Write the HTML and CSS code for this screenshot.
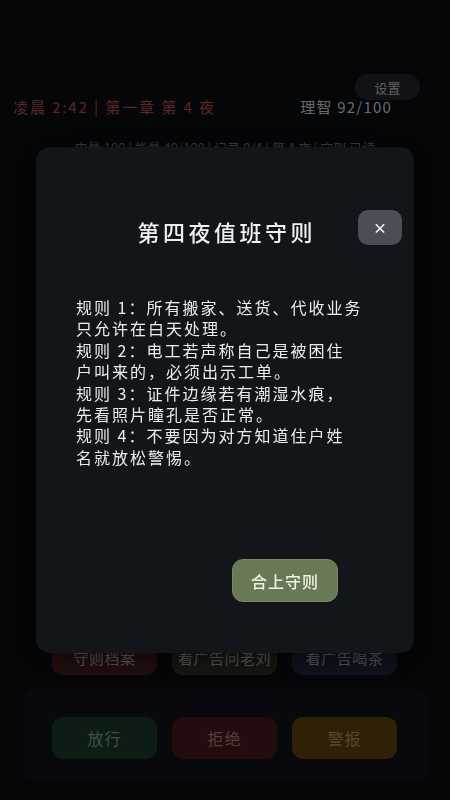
FILE: index.html
```html
<!DOCTYPE html>
<html lang="zh-CN">
<head>
<meta charset="utf-8">
<title>第四夜值班守则</title>
<link rel="stylesheet" href="styles.css">
</head>
<body>
<div class="app">
  <div class="top-row">
    <button class="settings">设置</button>
  </div>
  <div class="status-row">
    <span class="time">凌晨 2:42 | 第一章 第 4 夜</span>
    <span class="sanity">理智 92/100</span>
  </div>
  <div class="info-line">电量 100 | 能量 40/100 | 记录 0/4 | 第 4 夜 | 守则 已读</div>

  <div class="tools-row">
    <button class="tool tool-red">守则档案</button>
    <button class="tool tool-olive">看广告问老刘</button>
    <button class="tool tool-navy">看广告喝茶</button>
  </div>
  <div class="action-panel">
    <button class="action action-green">放行</button>
    <button class="action action-red">拒绝</button>
    <button class="action action-yellow">警报</button>
  </div>
</div>

<div class="overlay">
  <div class="modal">
    <div class="modal-header">
      <span></span>
      <h2 class="modal-title">第四夜值班守则</h2>
      <button class="close-btn">×</button>
    </div>
    <div class="rules">
      <p>规则 1：所有搬家、送货、代收业务只允许在白天处理。</p>
      <p>规则 2：电工若声称自己是被困住<br>户叫来的，必须出示工单。</p>
      <p>规则 3：证件边缘若有潮湿水痕，<br>先看照片瞳孔是否正常。</p>
      <p>规则 4：不要因为对方知道住户姓<br>名就放松警惕。</p>
    </div>
    <button class="confirm-btn">合上守则</button>
  </div>
</div>
</body>
</html>
```
FILE: styles.css
```css
* { box-sizing: border-box; }
html, body {
  margin: 0;
  padding: 0;
  width: 450px;
  height: 800px;
  overflow: hidden;
  background: #060709;
  font-family: "Noto Sans CJK SC", "Noto Sans", sans-serif;
}
button {
  font-family: inherit;
  border: none;
  cursor: pointer;
  padding: 0;
}
.app {
  height: 800px;
  display: flex;
  flex-direction: column;
  padding-top: 74px;
}
.top-row {
  display: flex;
  justify-content: flex-end;
  padding-right: 30px;
}
.settings {
  width: 65px;
  height: 26px;
  border-radius: 13px;
  background: #131518;
  color: #6c6f74;
  font-size: 13px;
}
.status-row {
  display: flex;
  justify-content: space-between;
  padding: 0 58px 0 13px;
  font-size: 15px;
  line-height: 14px;
  letter-spacing: 1.9px;
}
.time { color: #6b2c2e; }
.sanity { color: #7a7b7e; letter-spacing: 1.2px; }
.info-line {
  margin-top: 26px;
  text-align: center;
  color: #404754;
  font-size: 13px;
  line-height: 16px;
}
.tools-row {
  margin-top: auto;
  display: flex;
  gap: 15px;
  padding-left: 52px;
}
.tool {
  width: 105px;
  height: 36px;
  border-radius: 10px;
  font-size: 15px;
  letter-spacing: 0.5px;
  color: #67686b;
}
.tool-red { background: #281112; }
.tool-olive { background: #1a1c14; }
.tool-navy { background: #121724; }
.action-panel {
  margin: 13px 22px 18px 23px;
  height: 94px;
  border-radius: 14px;
  background: #090b0e;
  display: flex;
  gap: 15px;
  padding: 29px 0 0 29px;
}
.action {
  width: 105px;
  height: 42px;
  border-radius: 11px;
  font-size: 16px;
  letter-spacing: 1px;
}
.action-green { background: #0f2218; color: #435e4b; }
.action-red { background: #2a0d0f; color: #634547; }
.action-yellow { background: #352607; color: #625334; }

.overlay {
  position: fixed;
  inset: 0;
  background: rgba(0, 0, 0, 0.12);
  padding: 147px 0 0 36px;
}
.modal {
  width: 378px;
  height: 506px;
  border-radius: 14px;
  background: #121519;
  box-shadow: 0 6px 30px rgba(0, 0, 0, 0.6);
  display: flex;
  flex-direction: column;
}
.modal-header {
  margin-top: 63px;
  display: grid;
  grid-template-columns: 1fr auto 1fr;
  align-items: start;
}
.modal-title {
  margin: 8px 0 0;
  padding-left: 3.5px;
  font-size: 22px;
  line-height: 26px;
  font-weight: 500;
  letter-spacing: 3.5px;
  color: #f0f0f0;
}
.close-btn {
  justify-self: end;
  margin-right: 12px;
  width: 44px;
  height: 35px;
  border-radius: 10px;
  background: #4a4f57;
  color: #f4f4f4;
  font-size: 14px;
  font-weight: 700;
  line-height: 35px;
}
.rules {
  margin: 52px 0 0 40px;
  width: 292px;
  color: #ececec;
  font-size: 16px;
  line-height: 21.4px;
  letter-spacing: 2px;
}
.rules p { margin: 0; }
.confirm-btn {
  align-self: flex-end;
  margin: 91px 76px 0 0;
  width: 106px;
  height: 43px;
  border-radius: 11px;
  background: #6a7955;
  border: 1px solid #7b8866;
  color: #eef1e0;
  font-size: 16px;
  font-weight: 500;
  letter-spacing: 1px;
}
```
